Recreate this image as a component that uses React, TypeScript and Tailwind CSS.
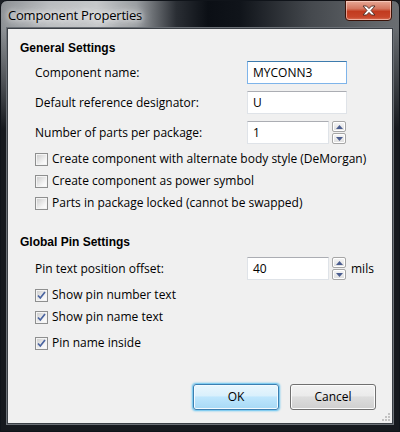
import React from 'react';

const body = { fontFamily: '"Open Sans", "Noto Sans", sans-serif' };
const heading = { fontFamily: '"Liberation Sans", Arial, sans-serif' };

function Spin() {
  return (
    <div className="ml-[3px] flex h-[23px] w-[14px] flex-col gap-[1px]">
      {[0, 1].map((i) => (
        <div
          key={i}
          className="flex flex-1 items-center justify-center rounded-[2px] border border-[#a6a6a6] bg-[linear-gradient(180deg,#f6f6f6,#dedede)] shadow-[inset_0_0_0_1px_#ffffff]"
        >
          <svg width="7" height="4" viewBox="0 0 7 4">
            {i === 0 ? <path d="M0 4 L3.5 0 L7 4 Z" fill="#4b5d8f" /> : <path d="M0 0 L3.5 4 L7 0 Z" fill="#4b5d8f" />}
          </svg>
        </div>
      ))}
    </div>
  );
}

function Field({ value, width, focused }: { value: string; width: string; focused?: boolean }) {
  return (
    <div
      className={`${width} flex h-[23px] items-center border bg-white pl-[5px] text-[12px] text-black ${
        focused ? 'border-[#7eb4ea] border-t-[#3d7bad]' : 'border-[#dfe3e8] border-t-[#abadb3]'
      }`}
    >
      {value}
    </div>
  );
}

function Row({ label, children }: { label: string; children: React.ReactNode }) {
  return (
    <div className="flex h-[23px] items-center pl-[27px]">
      <div className="w-[212px] text-[12px] text-black">{label}</div>
      {children}
    </div>
  );
}

function Box({ checked }: { checked?: boolean }) {
  return (
    <div className="flex h-[13px] w-[13px] shrink-0 items-center justify-center border border-[#8e8f8f] bg-white">
      <div className="flex h-[11px] w-[11px] items-center justify-center border border-[#f4f4f4] bg-[linear-gradient(135deg,#cfcfcf,#f4f4f4_70%,#fdfdfd)]">
        {checked && (
          <svg width="9" height="9" viewBox="0 0 9 9">
            <path d="M1 4.5 L3.3 7 L8 1" fill="none" stroke="#4a64a0" strokeWidth="1.7" />
          </svg>
        )}
      </div>
    </div>
  );
}

function Check({ label, checked }: { label: string; checked?: boolean }) {
  return (
    <div className="flex h-[22px] items-center gap-[4px] whitespace-nowrap pl-[27px] text-[12px] text-black">
      <Box checked={checked} />
      <span>{label}</span>
    </div>
  );
}

export default function App() {
  return (
    <div className="h-[432px] w-[400px] bg-[#1b1f25]" style={body}>
      <div className="flex h-full flex-col rounded-t-[7px] border border-[#10141a] bg-[linear-gradient(90deg,#8c9094_0%,#b9bcbf_12%,#c6c8ca_24%,#9a9ea2_34%,#2a2e34_44%,#0b0f15_52%,#10141a_60%,#45494e_78%,#5e6266_92%,#6a6e72_100%)]">
        <div className="flex h-[27px] items-start justify-between pl-[7px] pr-[7px]">
          <span className="mt-[5px] text-[13px] tracking-[-0.2px] text-black [text-shadow:0_0_5px_#f4f4f4,0_0_9px_#eeeeee,0_0_12px_#e0e0e0]">
            Component Properties
          </span>
          <div className="-mt-px flex h-[21px] w-[47px] items-center justify-center rounded-b-[4px] border border-[#3a1208] bg-[linear-gradient(180deg,#e7a896_0%,#d47760_40%,#c23b1f_55%,#c8462a_85%,#d9735a_100%)] shadow-[inset_0_0_0_1px_rgba(255,220,210,0.6)]">
            <svg width="14" height="11" viewBox="0 0 14 11">
              <path
                d="M1 1 H4.5 L7 3.6 L9.5 1 H13 L9 5.5 L13 10 H9.5 L7 7.4 L4.5 10 H1 L5 5.5 Z"
                fill="#ffffff"
                stroke="#4a2a22"
                strokeWidth="0.9"
                strokeLinejoin="round"
              />
            </svg>
          </div>
        </div>
        <div className="flex flex-1 flex-col bg-[linear-gradient(180deg,rgba(0,0,0,0)_0%,#16191e_25%,#16191e_100%)] px-[6px] pb-[7px]">
          <div className="relative flex flex-1 flex-col border border-[#3b4046] bg-[#f0f0f0] pt-[12px] shadow-[0_0_0_1px_#6b7076]">
            <div className="h-[14px] pl-[12px] text-[12px] font-bold leading-[14px] text-black" style={heading}>
              General Settings
            </div>
            <div className="mt-[6px]">
              <Row label="Component name:">
                <Field value="MYCONN3" width="w-[100px]" focused />
              </Row>
            </div>
            <div className="mt-[7px]">
              <Row label="Default reference designator:">
                <Field value="U" width="w-[100px]" />
              </Row>
            </div>
            <div className="mt-[7px]">
              <Row label="Number of parts per package:">
                <Field value="1" width="w-[82px]" />
                <Spin />
              </Row>
            </div>
            <div className="mt-[4px]">
              <Check label="Create component with alternate body style (DeMorgan)" />
              <Check label="Create component as power symbol" />
              <Check label="Parts in package locked (cannot be swapped)" />
            </div>
            <div className="mt-[21px] h-[14px] pl-[12px] text-[12px] font-bold leading-[14px] text-black" style={heading}>
              Global Pin Settings
            </div>
            <div className="mt-[8px]">
              <Row label="Pin text position offset:">
                <Field value="40" width="w-[82px]" />
                <Spin />
                <span className="ml-[5px] text-[12px]">mils</span>
              </Row>
            </div>
            <div className="mt-[4px]">
              <Check label="Show pin number text" checked />
              <Check label="Show pin name text" checked />
              <div className="mt-[4px]">
                <Check label="Pin name inside" checked />
              </div>
            </div>
            <div className="mt-[30px] flex justify-end gap-[11px] pr-[16px] text-[12px] text-black">
              <button className="h-[26px] w-[86px] rounded-[3px] border border-[#3c7fb1] bg-[linear-gradient(180deg,#eaf6fd_0%,#d9f0fc_45%,#bee6fd_50%,#a7d9f5_100%)] shadow-[0_0_2px_1px_#5cc0f0,inset_0_0_0_1px_#f4fbff]">
                OK
              </button>
              <button className="h-[26px] w-[86px] rounded-[3px] border border-[#707070] bg-[linear-gradient(180deg,#f2f2f2_0%,#ebebeb_45%,#dddddd_50%,#cfcfcf_100%)] shadow-[inset_0_0_0_1px_#fcfcfc]">
                Cancel
              </button>
            </div>
            <svg className="absolute bottom-[2px] right-[2px]" width="10" height="10" viewBox="0 0 10 10">
              {[
                [8, 0], [8, 3], [5, 3], [8, 6], [5, 6], [2, 6],
              ].map(([x, y], i) => (
                <rect key={i} x={x} y={y + 2} width="2" height="2" fill="#c2c2c2" />
              ))}
            </svg>
          </div>
        </div>
      </div>
    </div>
  );
}
